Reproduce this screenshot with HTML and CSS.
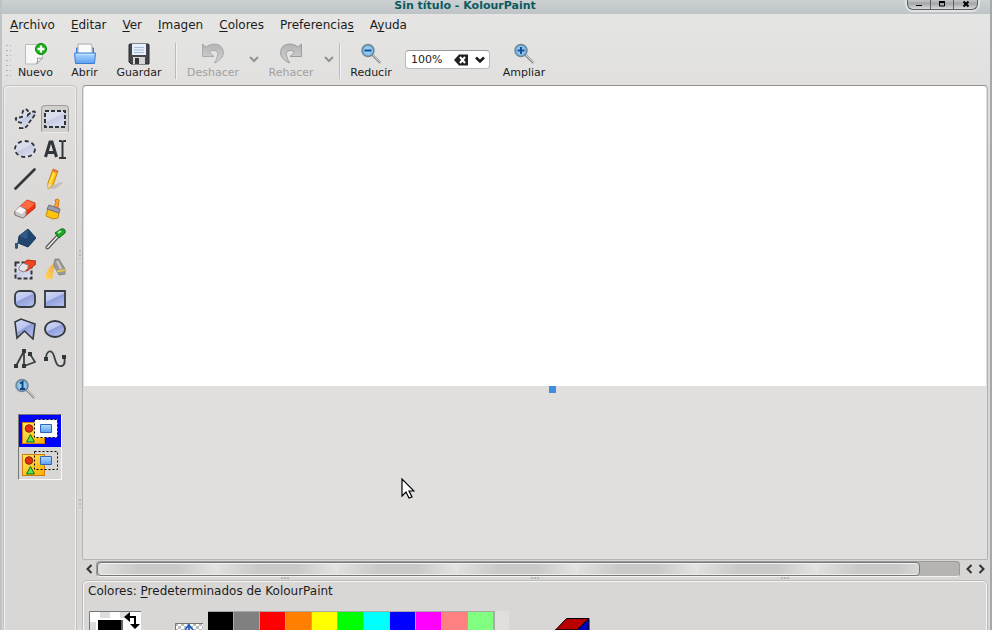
FILE: index.html
```html
<!DOCTYPE html>
<html lang="es">
<head>
<meta charset="utf-8">
<title>Sin título - KolourPaint</title>
<link rel="stylesheet" href="styles.css">
</head>
<body>
<svg class="defs" aria-hidden="true">
  <defs>
    <linearGradient id="shape" x1="0" y1="0" x2=".6" y2="1"><stop offset="0" stop-color="#d3daf5"/><stop offset=".5" stop-color="#bcc6ee"/><stop offset=".56" stop-color="#909edb"/><stop offset="1" stop-color="#b0bbea"/></linearGradient>
    <linearGradient id="pale" x1="0" y1="0" x2=".6" y2="1"><stop offset="0" stop-color="#dde0ee"/><stop offset=".5" stop-color="#d8dcec"/><stop offset=".56" stop-color="#c6cbe2"/><stop offset="1" stop-color="#d8dcf0"/></linearGradient>
    <linearGradient id="sun" x1="0" y1="0" x2="1" y2="1"><stop offset="0" stop-color="#ffe95a"/><stop offset="1" stop-color="#ffae00"/></linearGradient>
    <linearGradient id="spray" x1="1" y1="0" x2="0" y2="1"><stop offset="0" stop-color="#f5a93c"/><stop offset="1" stop-color="#ffd75e"/></linearGradient>
    <linearGradient id="sky" x1="0" y1="0" x2="0" y2="1"><stop offset="0" stop-color="#b4dcff"/><stop offset="1" stop-color="#5c9ff0"/></linearGradient>
    <linearGradient id="grey" x1="0" y1="0" x2="0" y2="1"><stop offset="0" stop-color="#b4b4b4"/><stop offset="1" stop-color="#d4d4d4"/></linearGradient>
    <radialGradient id="lens"><stop offset="0" stop-color="#a9dcf8"/><stop offset=".7" stop-color="#86c3ea"/><stop offset="1" stop-color="#5a9bc9"/></radialGradient>
    <symbol id="glass" viewBox="0 0 22 22"><path d="M12 11.500l8.500 8.500" stroke="#8b8b8b" stroke-width="2.400"/><path d="M12.500 11.500l8.500 8.500" stroke="#d4d4d4" stroke-width="1"/><circle cx="8" cy="7.500" r="6" fill="url(#lens)" stroke="#6f8798" stroke-width="1.500"/></symbol>
    <symbol id="picture" viewBox="0 0 36 25"><rect x=".5" y="3.500" width="22" height="21" fill="url(#sun)" stroke="#d47b10"/><circle cx="7" cy="9.500" r="3.800" fill="#e52e0c" stroke="#8a2410"/><path d="M8.500 15.500l4 7.500h-8z" fill="#5be04f" stroke="#126c12"/></symbol>
  </defs>
</svg>

<div class="window">
  <header class="titlebar">
    <h1>Sin título - KolourPaint</h1>
    <div class="winbuttons">
      <button aria-label="Minimizar"><svg width="10" height="9"><path d="M2 5.500h6" stroke="#000" stroke-width="1"/></svg></button>
      <button aria-label="Maximizar"><svg width="10" height="9"><path d="M2.500 2h5v4h-5z" fill="none" stroke="#000"/><path d="M2 2h6" stroke="#000" stroke-width="2"/></svg></button>
      <button aria-label="Cerrar"><svg width="10" height="9"><path d="M2.500 1.500l5 5M7.500 1.500l-5 5" stroke="#000" stroke-width="2"/></svg></button>
    </div>
  </header>

  <nav class="menubar">
    <a href="#"><u>A</u>rchivo</a><a href="#"><u>E</u>ditar</a><a href="#"><u>V</u>er</a><a href="#"><u>I</u>magen</a><a href="#"><u>C</u>olores</a><a href="#">Preferencia<u>s</u></a><a href="#">A<u>y</u>uda</a>
  </nav>

  <div class="toolbar">
    <span class="grip"></span>
    <button class="action narrow"><svg width="22" height="22" viewBox="0 0 22 22"><path d="M.5 1.500h17V15l-6 6H.5z" fill="#f7f7f7" stroke="#bbb"/><path d="M17.500 15l-6 6q2-3 1-6 3 1 5 0z" fill="#fff" stroke="#999"/><circle cx="16" cy="6" r="5.500" fill="#14b014" stroke="#078607"/><path d="M16 2.500v7M12.500 6h7" stroke="#fff" stroke-width="2.400"/></svg>Nuevo</button>
    <button class="action narrow"><svg width="22" height="22" viewBox="0 0 22 22"><path d="M2.500 12V5h17v7" fill="#80b4f0" stroke="#3b78c9"/><path d="M4 1h13l1 2v9H4z" fill="#fafafa" stroke="#aaa"/><path d="M.5 10h21l-1 10.500h-19z" fill="url(#sky)" stroke="#3b7fd8"/><path d="M2 11.500h18" stroke="#c4e0ff"/></svg>Abrir</button>
    <button class="action wide"><svg width="22" height="22" viewBox="0 0 22 22"><path d="M1 2q0-1 1-1h18q1 0 1 1v19H3l-2-2z" fill="#45464d" stroke="#292a30"/><path d="M4 1h14v11H4z" fill="#e6effa"/><path d="M6 4.500h10M6 7h10M6 9.500h10" stroke="#a5bbd8"/><path d="M5 14h12v7H5z" fill="#d4d4d4"/><path d="M7 15h4v6H7z" fill="#34353a"/></svg>Guardar</button>
    <span class="sep"></span>
    <button class="action wide" disabled><svg width="22" height="22" viewBox="0 0 22 22"><path d="M.5 1v12.500H12L7.500 9.500Q10 6.500 13 7.500 17 9 15.500 13 14.500 17 12.500 20 21 16 21.500 10 21 1 12 1 7.500 1 4 4z" fill="url(#grey)" stroke="#ababab"/></svg>Deshacer</button>
    <button class="drop" aria-label="Lista de deshacer" disabled><svg width="10" height="7" viewBox="0 0 10 7"><path d="M1 1l4 4 4-4" fill="none" stroke="#929292" stroke-width="2"/></svg></button>
    <button class="action mid" disabled><svg width="22" height="22" viewBox="0 0 22 22"><path d="M21.500 1v12.500H10L14.500 9.500Q12 6.500 9 7.500 5 9 6.500 13 7.500 17 9.500 20 1 16 .5 10 1 1 10 1 14.500 1 18 4z" fill="url(#grey)" stroke="#9c9c9c"/></svg>Rehacer</button>
    <button class="drop" aria-label="Lista de rehacer" disabled><svg width="10" height="7" viewBox="0 0 10 7"><path d="M1 1l4 4 4-4" fill="none" stroke="#929292" stroke-width="2"/></svg></button>
    <span class="sep tight"></span>
    <button class="action mid"><svg width="22" height="22"><use href="#glass"/><path d="M4.500 7.500h7" stroke="#164f9c" stroke-width="2"/></svg>Reducir</button>
    <div class="zoombox">
      <input type="text" value="100%" aria-label="Ampliación">
      <button aria-label="Limpiar"><svg width="14" height="12" viewBox="0 0 14 12"><path d="M0 6l5-5.500h9v11H5z" fill="#222"/><path d="M6 3l5 6M11 3L6 9" stroke="#fff" stroke-width="2"/></svg></button>
      <button aria-label="Elegir ampliación"><svg width="10" height="8" viewBox="0 0 10 8"><path d="M1 1.500l4 4 4-4" fill="none" stroke="#1a1a1a" stroke-width="2.500"/></svg></button>
    </div>
    <button class="action mid"><svg width="22" height="22"><use href="#glass"/><path d="M4.500 7.500h7M8 4v7" stroke="#164f9c" stroke-width="2"/></svg>Ampliar</button>
  </div>

  <main class="workspace">
    <aside class="toolbox">
      <div class="tools">
        <button aria-label="Selección libre"><svg viewBox="0 0 22 22"><path d="M5 20Q13 21 14 16L20 8Q22 5 20.500 3.500 18 3 14 7 15 1 11 1.500 8 2 8 9L2 10Q1 11 3 13 5 15 9 15 10 18 5 20z" fill="url(#pale)"/><path d="M5 20Q13 21 14 16L20 8Q22 5 20.500 3.500 18 3 14 7 15 1 11 1.500 8 2 8 9L2 10Q1 11 3 13 5 15 9 15" fill="none" stroke="#2f3438" stroke-width="1.800" stroke-dasharray="4 2"/></svg></button>
        <button aria-label="Selección rectangular" class="active"><svg viewBox="0 0 22 22"><path d="M1 3h20v16H1z" fill="url(#pale)" stroke="#2f3438" stroke-width="2" stroke-dasharray="4 2"/></svg></button>
        <button aria-label="Selección elíptica"><svg viewBox="0 0 22 22"><ellipse cx="11" cy="11" rx="10" ry="8" fill="url(#pale)" stroke="#2f3438" stroke-width="1.800" stroke-dasharray="4 3"/></svg></button>
        <button aria-label="Texto"><svg viewBox="0 0 22 22"><path d="M1.500 19L6 4h2l4.500 15M3.500 14.500h7" fill="none" stroke="#30363a" stroke-width="3"/><path d="M15 3h2l1.500 1L20 3h2M15 20h2l1.500-1 1.500 1h2M18.500 4v15" fill="none" stroke="#30363a" stroke-width="2"/></svg></button>
        <button aria-label="Línea"><svg viewBox="0 0 22 22"><path d="M1.500 20.500l19-19" stroke="#30363a" stroke-width="2.600" stroke-linecap="round"/></svg></button>
        <button aria-label="Lápiz"><svg viewBox="0 0 22 22"><path d="M5 20l11-6 3 1-8 6z" fill="#c2c0bd"/><path d="M9 1l5 2-5 14-5 4V15z" fill="#ffc40d" stroke="#c98a00"/><path d="M4.500 15l4 2-5 4z" fill="#f4d6a2"/><path d="M9 1l5 2-1 2-5-2z" fill="#ed705b"/><path d="M10 5L6 15" stroke="#ffec7c" stroke-width="1.500"/></svg></button>
        <button aria-label="Borrador"><svg viewBox="0 0 22 22"><path d="M1 13L13 2l8 3v5L9 20l-8-3z" fill="#ef3510" stroke="#b0301b"/><path d="M6 8.500l8 3 7-6-8-3.500z" fill="#ff6a43"/><path d="M1 13l5-4.500 6 3V17l-3 3-8-3z" fill="#c9c7c7" stroke="#888"/><path d="M1 13l7 3 4-4-6-3.500z" fill="#f5f5f5"/></svg></button>
        <button aria-label="Brocha"><svg viewBox="0 0 22 22"><path d="M10 8l2-3 -1-3q3-2 4 0l-1 8z" fill="#ffa632" stroke="#d0781b"/><path d="M4 10l11 5-1 5-5 1-7-3z" fill="#ffc310" stroke="#c78800"/><path d="M5 7l11 4-1 4-12-4z" fill="#9b9eaa" stroke="#707380"/></svg></button>
        <button aria-label="Relleno"><svg viewBox="0 0 22 22"><path d="M14 1l8 9-8 9-10-4 1-7z" fill="#21456f" stroke="#1a395f"/><path d="M14 1L5 8l8 3z" fill="#305b87"/><path d="M1 15h3v5q-2 2-3 0z" fill="#315575"/></svg></button>
        <button aria-label="Selector de color"><svg viewBox="0 0 22 22"><path d="M2 19L13 7l2 2L5 20q-3 2-3-1z" fill="#eee" stroke="#555" stroke-width="1.200"/><path d="M11 5l6-4q5-1 4 4l-6 5z" fill="#23a328" stroke="#077411"/><path d="M14 5l3-2" stroke="#a1f1a0" stroke-width="2"/></svg></button>
        <button aria-label="Borrador de color"><svg viewBox="0 0 22 22"><path d="M1.500 4.500h16v16h-16z" fill="url(#pale)" stroke="#2f3438" stroke-width="2" stroke-dasharray="4 2"/><path d="M6 9l7-7 9 1v3l-9 7-7-1z" fill="#f04320" stroke="#b5331c"/><path d="M5 9l4-4 5 2v3l-4 4-5-2z" fill="#e5e5e5" stroke="#888"/></svg></button>
        <button aria-label="Aerógrafo"><svg viewBox="0 0 22 22"><path d="M10 5Q2 11 1 21H8Q10 12 11 6z" fill="url(#spray)"/><path d="M10 5l1-4h4l6 10v5l-6 1-5-9z" fill="#9a9a94" stroke="#8a8a86"/><path d="M13 13.500l8-1.500" stroke="#e5c64c" stroke-width="2"/><path d="M13 3l4 8" stroke="#ccc" stroke-width="2"/></svg></button>
        <button aria-label="Rectángulo redondeado"><svg viewBox="0 0 22 22"><rect x="1" y="3" width="20" height="16" rx="5" fill="url(#shape)" stroke="#333a40" stroke-width="1.800"/></svg></button>
        <button aria-label="Rectángulo"><svg viewBox="0 0 22 22"><path d="M1 3h20v16H1z" fill="url(#shape)" stroke="#333a40" stroke-width="1.800"/></svg></button>
        <button aria-label="Polígono"><svg viewBox="0 0 22 22"><path d="M1 4l6-3 14 5-2 15-8.500-8L3 20z" fill="url(#shape)" stroke="#333a40" stroke-width="1.600"/></svg></button>
        <button aria-label="Elipse"><svg viewBox="0 0 22 22"><ellipse cx="11" cy="11" rx="10" ry="8" fill="url(#shape)" stroke="#333a40" stroke-width="1.800"/></svg></button>
        <button aria-label="Líneas conectadas"><svg viewBox="0 0 22 22"><path d="M2 18l8-15v15l11-4-5-8" fill="none" stroke="#3a4044" stroke-width="1.800"/><path d="M0 16h4v4H0zM8 1h4v4H8zM8 16h4v4H8zM14 4h4v4h-4z" fill="#30363a"/></svg></button>
        <button aria-label="Curva"><svg viewBox="0 0 22 22"><path d="M2 11C2 2 8 1 10 8s3 11 8 10q4-2 2-9" fill="none" stroke="#3a4044" stroke-width="1.800"/><path d="M0 9h4v4H0zM18 7h4v4h-4z" fill="#30363a"/></svg></button>
        <button aria-label="Ampliación"><svg viewBox="0 0 22 22"><use href="#glass"/><path d="M6 5.500L8.500 4v7M6 11h5" fill="none" stroke="#16407d" stroke-width="2"/></svg></button>
      </div>
      <div class="modes">
        <button class="chosen" aria-label="Opaco"><svg width="36" height="25" viewBox="0 0 36 25"><use href="#picture"/><path d="M12.500.5h23v18h-23z" fill="#fff" stroke="#000" stroke-dasharray="2 2"/><path d="M18.500 5.500h11v8h-11z" fill="url(#sky)" stroke="#2f66ba"/></svg></button>
        <button aria-label="Transparente"><svg width="36" height="25" viewBox="0 0 36 25"><use href="#picture"/><path d="M12.500.5h23v18h-23z" fill="none" stroke="#000" stroke-dasharray="2 2"/><path d="M18.500 5.500h11v8h-11z" fill="url(#sky)" stroke="#2f66ba"/></svg></button>
      </div>
    </aside>
    <div class="splitter"><i></i><i></i></div>
    <section class="document">
      <div class="view">
        <div class="paper"><span class="handle"></span></div>
        <svg class="pointer" width="14" height="21" viewBox="0 0 14 21"><path d="M1 1v17l4-4 3 6 3-1-3-6h5z" fill="#fff" stroke="#000" stroke-width="1.200"/></svg>
      </div>
      <div class="scroller">
        <button aria-label="Desplazar a la izquierda"><svg width="8" height="10" viewBox="0 0 8 10"><path d="M6.500 1l-4 4 4 4" fill="none" stroke="#333" stroke-width="2"/></svg></button>
        <div class="track"><div class="thumb"></div></div>
        <button aria-label="Izquierda"><svg width="8" height="10" viewBox="0 0 8 10"><path d="M6.500 1l-4 4 4 4" fill="none" stroke="#333" stroke-width="2"/></svg></button>
        <button aria-label="Derecha"><svg width="8" height="10" viewBox="0 0 8 10"><path d="M1.500 1l4 4-4 4" fill="none" stroke="#333" stroke-width="2"/></svg></button>
      </div>
      <div class="rowgrip"><i></i><i></i><i></i></div>
      <div class="dock">
        <h2>Colores: <u>P</u>redeterminados de KolourPaint</h2>
        <div class="colors">
          <svg class="current" width="52" height="52" viewBox="0 0 52 52"><path d="M0 0h52v52H0z" fill="#fff"/><path d="M11 1h10v6H11zM1 11h6v10H1zM31 1h10v6H31z" fill="#ddd"/><path d="M.5 52V.5H52" fill="none" stroke="#777"/><path d="M9 9h23v25H9z" fill="#000"/><path d="M32 9h2v25h-2z" fill="#666"/><path d="M35 6l6-5v4h6v8h4l-5 5-5-5h4V7h-4v4z" fill="#000"/></svg>
          <svg class="none" width="28" height="28" viewBox="0 0 28 28"><defs><pattern id="check" width="6" height="6" patternUnits="userSpaceOnUse"><path d="M0 0h6v6H0z" fill="#fff"/><path d="M0 0h3v3H0zM3 3h3v3H3z" fill="#bbb"/></pattern></defs><path d="M0 0h28v28H0z" fill="url(#check)"/><path d="M.5 28V.5H28" fill="none" stroke="#777"/><path d="M14 1v26M10 7l4-5 4 5" fill="none" stroke="#1a5cc0" stroke-width="1.600"/></svg>
          <div class="palette">
            <button class="black" aria-label="Negro"></button><button class="gray" aria-label="Gris"></button><button class="red" aria-label="Rojo"></button><button class="orange" aria-label="Naranja"></button><button class="yellow" aria-label="Amarillo"></button><button class="green" aria-label="Verde"></button><button class="cyan" aria-label="Cian"></button><button class="blue" aria-label="Azul"></button><button class="magenta" aria-label="Magenta"></button><button class="pink" aria-label="Rosa"></button><button class="mint" aria-label="Verde claro"></button>
          </div>
          <span class="blank"></span>
          <svg class="cube" width="35" height="36" viewBox="0 0 35 36"><path d="M.5 12L11.500.5H34L22 12z" fill="#b80000" stroke="#000"/><path d="M34 .5V24L22 36V12z" fill="#0000b8" stroke="#000"/><path d="M.5 12H22v23H.5z" fill="#00b800" stroke="#000"/></svg>
        </div>
      </div>
    </section>
  </main>
</div>
</body>
</html>
```
FILE: styles.css
```css
* { box-sizing: border-box; }
body { margin: 0; font: 12px/16px "DejaVu Sans", sans-serif; color: #1c1c1c; background: #dad9d7; overflow: hidden; }
button { margin: 0; padding: 0; border: 0; background: none; font: inherit; color: inherit; display: flex; align-items: center; justify-content: center; flex: none; }
svg { display: block; flex: none; }
h1, h2 { margin: 0; font-size: 12px; }
u { text-underline-offset: 2px; }
.defs { position: absolute; width: 0; height: 0; }

.window { height: 100vh; display: flex; flex-direction: column; border-left: 2px solid #bfc3c5; border-right: 2px solid #a5a9ab; background: linear-gradient(#e6e6e5, #e1e0df 85px, #d8d7d5 240px); }

.titlebar { position: relative; height: 14px; flex: none; display: flex; justify-content: center; background: linear-gradient(#cdd1d3, #bec3c6); }
.titlebar h1 { font-size: 11px; line-height: 11px; color: #0b5a60; padding-right: 62px; }
.winbuttons { position: absolute; right: 12px; top: 0; display: flex; height: 10px; border: 1px solid #5c6063; border-top: 0; border-radius: 0 0 6px 6px; box-shadow: 0 0 0 2px #e1e4e5; background: linear-gradient(#c4c6c7, #a4a6a7 40%, #d8d9da); }
.winbuttons button { width: 23px; height: 9px; border-right: 1px solid #5c6063; }
.winbuttons button:last-child { border-right: 0; }

.menubar { display: flex; gap: 16px; height: 22px; flex: none; align-items: center; padding-left: 8px; }
.menubar a { color: inherit; text-decoration: none; }

.toolbar { display: flex; height: 49px; flex: none; padding: 7px 0 0 3px; font-size: 11px; line-height: 13px; }
.toolbar .grip { width: 6px; height: 35px; flex: none; background: radial-gradient(circle, #b2b2b1 1px, transparent 1px) 0 0 / 4px 5px; }
.action { flex-direction: column; justify-content: flex-start; gap: 1px; height: 37px; }
.action:disabled { color: #a0a09f; }
.narrow { width: 49px; }
.mid { width: 54px; }
.wide { width: 60px; }
.sep { width: 2px; height: 36px; margin: 0 6px; background: linear-gradient(90deg, #bcbbba 50%, #f2f2f2 50%); flex: none; }
.sep.tight { margin: 0 3px 0 0; }
.drop { width: 21px; height: 32px; }
.zoombox { display: flex; align-items: center; width: 85px; height: 19px; margin: 7px 7px 0; padding: 0 4px; background: #fff; border: 1px solid #bbb; border-top-color: #999; border-radius: 4px; gap: 7px; flex: none; }
.zoombox input { flex: 1; min-width: 0; width: 0; border: 0; padding: 0 0 0 1px; background: none; font: inherit; color: inherit; outline: 0; }
.zoombox button { height: 16px; }

.workspace { display: flex; flex: 1; min-height: 0; }
.toolbox { width: 74px; flex: none; margin-left: 1px; padding-top: 18px; border: 1px solid #c2c1c0; border-bottom: 0; border-radius: 5px 5px 0 0; box-shadow: inset 1px 1px #f0f0ef, inset -1px 0 #f0f0ef; }
.tools { display: grid; grid-template-columns: 30px 30px; grid-auto-rows: 30px; justify-content: center; }
.tools svg { width: 22px; height: 22px; }
.tools button { border-radius: 4px; }
.tools .active { margin: 1px; background: #d0cfcd; border: 1px solid #a09f9e; border-bottom-color: #eee; }
.modes { width: 44px; margin: 10px 0 0 14px; border: 1px solid #fafafa; border-left-color: #777; border-top-color: #777; }
.modes button { width: 100%; height: 32px; }
.modes .chosen { background: #0000ff; }
.splitter { width: 5px; flex: none; display: flex; flex-direction: column; align-items: center; gap: 240px; padding-top: 165px; }
.splitter i { width: 2px; height: 9px; background: repeating-linear-gradient(#bbb 0 2px, transparent 2px 4px); }

.document { flex: 1; min-width: 0; display: flex; flex-direction: column; margin-right: 2px; }
.view { position: relative; flex: 1; min-height: 0; border: 1px solid #b5b4b2; border-top-color: #92918f; border-radius: 4px 4px 2px 2px; padding: 0 1px; background: #e0dfdd; }
.paper { position: relative; height: 300px; background: #fff; border-top-left-radius: 3px; border-top-right-radius: 3px; }
.handle { position: absolute; left: 465px; top: 100%; width: 7px; height: 7px; background: #3f8ddc; }
.pointer { position: absolute; left: 318px; top: 392px; }
.scroller { height: 16px; margin-top: 1px; flex: none; display: flex; align-items: center; }
.scroller button { width: 13px; }
.track { flex: 1; height: 16px; margin: 0 2px 0 1px; background: #b5b4b2; border: 1px solid #999; border-bottom-color: #f1f1f1; border-radius: 4px; }
.thumb { width: 823px; max-width: 96%; height: 14px; border: 1px solid #777; border-radius: 4px; box-shadow: inset 0 1px #f3f3f3, inset 0 -1px #eee; background: repeating-linear-gradient(90deg, #e0e0de 0, #c9c9c8 40px, #c9c9c8 80px, #e4e4e2 120px); }
.rowgrip { height: 3px; flex: none; display: flex; justify-content: center; gap: 242px; }
.rowgrip i { width: 8px; height: 2px; background: repeating-linear-gradient(90deg, #b5b5b4 0 2px, transparent 2px 3px); }
.dock { height: 50px; flex: none; overflow: hidden; border: 1px solid #bcbbb9; border-bottom: 0; border-radius: 5px 5px 0 0; box-shadow: inset 1px 1px #f5f5f4, inset -1px 0 #f5f5f4; padding: 2px 5px 0; }
.dock h2 { font-weight: normal; line-height: 16px; }
.colors { display: flex; align-items: flex-start; margin: 12px 0 0 1px; }
.none { margin: 12px 5px 0 34px; }
.palette { display: flex; background: #aaa; padding: 1px 1px 0 0; }
.palette button { width: 26px; height: 30px; border-right: 1px solid #aaa; }
.black { background: #000; } .gray { background: #808080; } .red { background: #f00; } .orange { background: #ff8000; }
.yellow { background: #ff0; } .green { background: #0f0; } .cyan { background: #0ff; } .blue { background: #00f; }
.magenta { background: #f0f; } .pink { background: #ff8080; } .mint { background: #80ff80; }
.blank { width: 14px; height: 30px; background: #e0dfdd; }
.cube { margin: 7px 0 0 46px; }
```
